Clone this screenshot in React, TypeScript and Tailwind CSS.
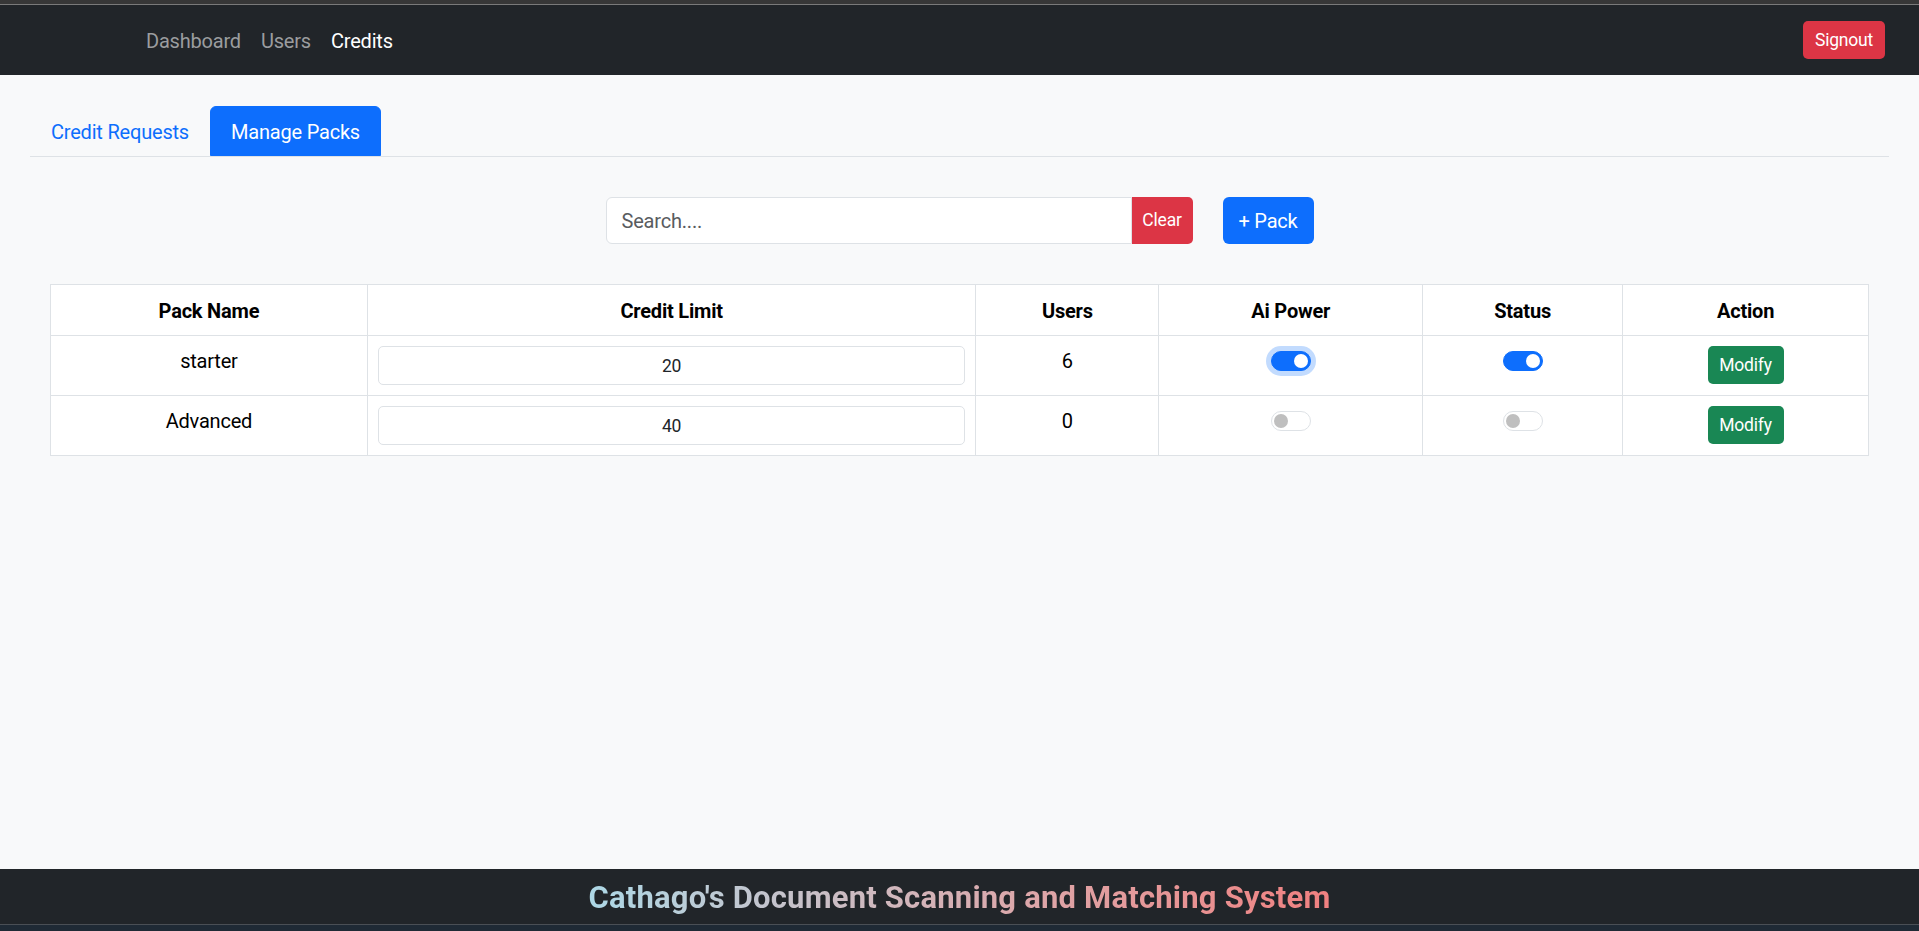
import React from "react";

const packs = [
  { id: 1, name: "starter", limit: 20, users: 6, ai: true, status: true },
  { id: 2, name: "Advanced", limit: 40, users: 0, ai: false, status: false },
];

function Toggle({ on, focused }: { on: boolean; focused?: boolean }) {
  return (
    <div
      className={`w-[40px] h-[20px] rounded-full border flex items-center px-[2px] ${
        on ? "bg-[#0d6efd] border-[#0d6efd] justify-end" : "bg-white border-[#dee2e6] justify-start"
      } ${focused ? "shadow-[0_0_0_5px_rgba(13,110,253,0.25)]" : ""}`}
    >
      <div className={`w-[14px] h-[14px] rounded-full ${on ? "bg-white" : "bg-[#bfbfbf]"}`} />
    </div>
  );
}

export default function App() {
  return (
    <div className="h-screen flex flex-col bg-[#f8f9fa] font-['Roboto','Liberation_Sans',sans-serif] tracking-[-0.2px] text-[#212529]">
      <div className="h-[4px] bg-[#373737]" />
      <div className="h-px bg-[#7a7a7a]" />

      {/* Navbar */}
      <nav className="h-[70px] bg-[#212529] flex items-center">
        <div className="flex pl-[136px] pt-px text-[20px] leading-[30px]">
          <a className="px-[10px] py-[10px] text-[#9b9d9f]">Dashboard</a>
          <a className="px-[10px] py-[10px] text-[#9b9d9f]">Users</a>
          <a className="px-[10px] py-[10px] text-white">Credits</a>
        </div>
        <button className="ml-auto mr-[34px] w-[82px] h-[38px] rounded-[5px] bg-[#dc3545] text-white text-[17.5px]">
          Signout
        </button>
      </nav>

      <main className="flex-1">
        {/* Tabs */}
        <div className="mx-[30px] mt-[31px] flex border-b border-[#dee2e6] text-[20px] leading-[30px]">
          <button className="h-[50px] px-5 pt-px border border-transparent text-[#0d6efd]">Credit Requests</button>
          <button className="h-[50px] px-5 pt-px border border-[#0d6efd] rounded-t-[6px] bg-[#0d6efd] text-white">
            Manage Packs
          </button>
        </div>

        {/* Search */}
        <div className="mt-[40px] flex justify-center gap-[30px]">
          <div className="flex w-[587px] h-[47px]">
            <input
              placeholder="Search...."
              className="flex-1 min-w-0 bg-white border border-[#dee2e6] rounded-l-[6px] px-[15px] pt-px text-[20px] placeholder:text-[#595c5f] outline-none"
            />
            <button className="w-[61px] bg-[#dc3545] text-white text-[17.5px] rounded-r-[5px]">Clear</button>
          </div>
          <button className="w-[91px] h-[47px] pt-px rounded-[6px] bg-[#0d6efd] text-white text-[20px]">+ Pack</button>
        </div>

        {/* Table */}
        <div className="mx-[50px] mt-[40px]">
          <table className="w-full border-collapse bg-white text-[20px] leading-[30px] text-black">
            <colgroup>
              <col className="w-[317px]" />
              <col className="w-[609px]" />
              <col className="w-[183px]" />
              <col className="w-[264px]" />
              <col className="w-[200px]" />
              <col className="w-[246px]" />
            </colgroup>
            <thead>
              <tr>
                {["Pack Name", "Credit Limit", "Users", "Ai Power", "Status", "Action"].map((h) => (
                  <th key={h} className="border border-[#dee2e6] pt-[11px] pb-[9px] px-[10px] font-bold text-center">
                    {h}
                  </th>
                ))}
              </tr>
            </thead>
            <tbody>
              {packs.map((p, i) => (
                <tr key={p.id}>
                  <td className="border border-[#dee2e6] p-[10px] text-center align-top">{p.name}</td>
                  <td className="border border-[#dee2e6] p-[10px] align-top">
                    <input
                      defaultValue={p.limit}
                      className="w-full h-[39px] border border-[#dee2e6] rounded-[5px] text-center text-[17.5px] text-[#212529] outline-none"
                    />
                  </td>
                  <td className="border border-[#dee2e6] p-[10px] text-center align-top">{p.users}</td>
                  <td className="border border-[#dee2e6] p-[10px] align-top">
                    <div className="h-[30px] flex items-center justify-center">
                      <Toggle on={p.ai} focused={i === 0} />
                    </div>
                  </td>
                  <td className="border border-[#dee2e6] p-[10px] align-top">
                    <div className="h-[30px] flex items-center justify-center">
                      <Toggle on={p.status} />
                    </div>
                  </td>
                  <td className="border border-[#dee2e6] p-[10px] align-top">
                    <div className="flex justify-center">
                      <button className="w-[76px] h-[38px] rounded-[5px] bg-[#198754] text-white text-[17.5px]">
                        Modify
                      </button>
                    </div>
                  </td>
                </tr>
              ))}
            </tbody>
          </table>
        </div>
      </main>

      {/* Footer */}
      <footer className="h-[55px] bg-[#212529] flex items-center justify-center pt-[3px]">
        <h4 className="text-[31px] font-bold leading-[36px] tracking-[0.2px] bg-linear-to-r from-[#add8e6] to-[#f08080] bg-clip-text text-transparent">
          Cathago's Document Scanning and Matching System
        </h4>
      </footer>
      <div className="h-px bg-[#4a4f55]" />
      <div className="h-[6px] bg-[#1f2a35]" />
    </div>
  );
}
